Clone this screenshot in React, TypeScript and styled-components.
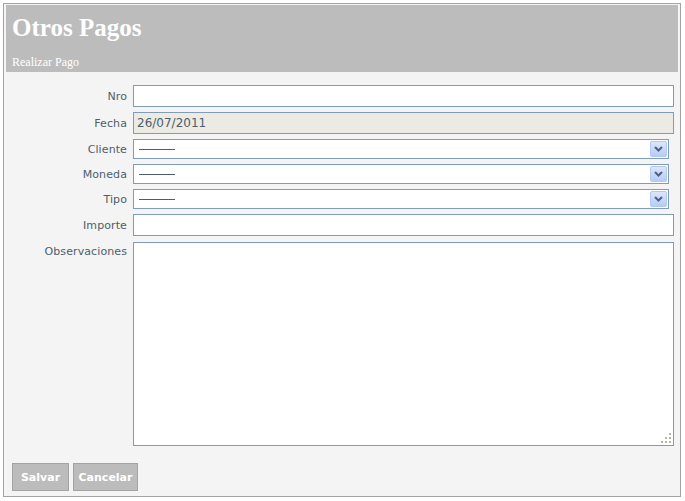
import React from "react";
import styled, { createGlobalStyle } from "styled-components";

const GlobalStyle = createGlobalStyle`
  html, body {
    margin: 0;
    padding: 0;
    background: #ffffff;
  }
`;

const Panel = styled.div`
  box-sizing: border-box;
  margin: 3px 0 0 3px;
  width: 678px;
  height: 494px;
  border: 1px solid #a3a3a3;
  background: #f4f4f4;
  padding: 1px 2px 2px 2px;
  display: flex;
  flex-direction: column;
`;

const Header = styled.div`
  background: #bcbcbc;
  height: 67px;
  box-sizing: border-box;
  padding: 9px 0 0 6px;
  color: #ffffff;
  font-family: "Liberation Serif", "Times New Roman", serif;
`;

const Title = styled.h1`
  margin: 0;
  font-size: 25px;
  font-weight: bold;
  line-height: 28px;
`;

const Subtitle = styled.div`
  margin-top: 13px;
  font-size: 12px;
  line-height: 14px;
`;

const Form = styled.div`
  display: grid;
  grid-template-columns: 121px 1fr;
  column-gap: 6px;
  row-gap: 5px;
  padding: 13px 4px 0 0;
  font-family: "DejaVu Sans", Verdana, sans-serif;
  font-size: 11px;
  color: #4d5d6d;
`;

const Label = styled.label<{ $top?: boolean }>`
  text-align: right;
  align-self: ${(p) => (p.$top ? "start" : "center")};
  padding-top: ${(p) => (p.$top ? "4px" : "0")};
  letter-spacing: 0.1px;
`;

const TextInput = styled.div<{ $disabled?: boolean }>`
  box-sizing: border-box;
  height: 22px;
  border: 1px solid #7f9db9;
  background: ${(p) => (p.$disabled ? "#ebebe4" : "#ffffff")};
  padding: 0 3px;
  line-height: 20px;
  font-size: 12px;
  color: #4d5d6d;
`;

const SelectBox = styled.div`
  box-sizing: border-box;
  height: 20px;
  margin-right: 5px;
  border: 1px solid #7f9db9;
  background: #ffffff;
  display: flex;
  align-items: center;
  justify-content: space-between;
  padding: 0 1px 0 3px;
`;

const Dash = styled.span`
  display: block;
  width: 36px;
  height: 1px;
  background: #4d5d6d;
  margin-left: 2px;
`;

const ArrowButton = styled.div`
  box-sizing: border-box;
  width: 17px;
  height: 16px;
  border: 1px solid #b4c8f4;
  border-radius: 2px;
  background: linear-gradient(#dce6fc, #b7cbf7);
  display: flex;
  align-items: center;
  justify-content: center;
`;

const TextArea = styled.div`
  box-sizing: border-box;
  height: 204px;
  margin-top: 1px;
  border: 1px solid #7f9db9;
  background: #ffffff;
  position: relative;
`;

const Grip = styled.svg`
  position: absolute;
  right: 2px;
  bottom: 2px;
`;

const Buttons = styled.div`
  display: flex;
  gap: 4px;
  padding: 17px 0 0 6px;
`;

const Button = styled.button<{ $w: number }>`
  box-sizing: border-box;
  width: ${(p) => p.$w}px;
  height: 28px;
  border: 1px solid #a4a4a4;
  background: #bcbcbc;
  color: #ffffff;
  font-family: "DejaVu Sans", Verdana, sans-serif;
  font-weight: bold;
  font-size: 11px;
  padding: 0;
`;

function Select() {
  return (
    <SelectBox>
      <Dash />
      <ArrowButton>
        <svg width="9" height="6" viewBox="0 0 9 6">
          <path d="M1 1 L4.5 4.5 L8 1" fill="none" stroke="#4d6185" strokeWidth="2" />
        </svg>
      </ArrowButton>
    </SelectBox>
  );
}

export default function App() {
  return (
    <>
      <GlobalStyle />
      <Panel>
        <Header>
          <Title>Otros Pagos</Title>
          <Subtitle>Realizar Pago</Subtitle>
        </Header>
        <Form>
          <Label>Nro</Label>
          <TextInput />
          <Label>Fecha</Label>
          <TextInput $disabled>26/07/2011</TextInput>
          <Label>Cliente</Label>
          <Select />
          <Label>Moneda</Label>
          <Select />
          <Label>Tipo</Label>
          <Select />
          <Label>Importe</Label>
          <TextInput />
          <Label $top>Observaciones</Label>
          <TextArea>
            <Grip width="10" height="10" viewBox="0 0 10 10">
              <g fill="#b8b4a4">
                <rect x="8" y="0" width="2" height="2" />
                <rect x="4" y="4" width="2" height="2" />
                <rect x="8" y="4" width="2" height="2" />
                <rect x="0" y="8" width="2" height="2" />
                <rect x="4" y="8" width="2" height="2" />
                <rect x="8" y="8" width="2" height="2" />
              </g>
            </Grip>
          </TextArea>
        </Form>
        <Buttons>
          <Button $w={57}>Salvar</Button>
          <Button $w={65}>Cancelar</Button>
        </Buttons>
      </Panel>
    </>
  );
}
